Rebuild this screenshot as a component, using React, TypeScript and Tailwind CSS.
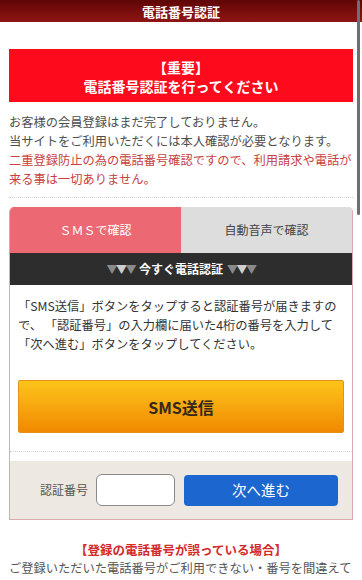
import React from "react";

const font = { fontFamily: '"Noto Sans CJK JP", "Noto Sans", sans-serif' };

const App = () => {
  return (
    <div
      className="relative w-[362px] h-[580px] overflow-hidden bg-white"
      style={font}
    >
      {/* header bar */}
      <div className="h-[22px] bg-gradient-to-b from-[#5e0606] via-[#7a0d0d] to-[#8e1515] flex items-center justify-center">
        <span className="text-white text-[13px] font-bold leading-none">
          電話番号認証
        </span>
      </div>

      <div className="px-[9px]">
        {/* notice */}
        <div className="mt-[27px] h-[53px] bg-[#fd0b1d] flex flex-col items-center justify-center pt-[3px] text-white font-bold text-[14px] leading-[19px]">
          <p>【重要】</p>
          <p>電話番号認証を行ってください</p>
        </div>

        <p className="mt-[11px] text-[12.25px] leading-[19px] text-[#4d4d4d] whitespace-nowrap">
          お客様の会員登録はまだ完了しておりません。
          <br />
          当サイトをご利用いただくには本人確認が必要となります。
          <br />
          <span className="text-[#c8413f]">
            二重登録防止の為の電話番号確認ですので、利用請求や電話が
            <br />
            来る事は一切ありません。
          </span>
        </p>

        <div className="mt-[8px] border-t border-dotted border-[#cfcfcf]" />

        {/* verification box */}
        <div className="mt-[9px] rounded-t-[5px] overflow-hidden border-x border-b border-[#dbaaae]">
          <div className="grid grid-cols-2 h-[46px] text-[12px]">
            <div className="bg-[#ec6974] text-white flex items-center justify-center">
              ＳＭＳで確認
            </div>
            <div className="bg-[#dddddd] text-[#444] flex items-center justify-center">
              自動音声で確認
            </div>
          </div>

          <div className="h-[32px] bg-[#2e2d2d] flex items-center justify-center gap-[4px] text-white font-bold text-[12px]">
            <span className="text-[11px] tracking-[-1.5px]">
              <span className="text-[#8a8a8a]">▼</span>
              <span className="text-[#cfcfcf]">▼</span>
              <span className="text-[#8a8a8a]">▼</span>
            </span>
            <span>今すぐ電話認証</span>
            <span className="text-[11px] tracking-[-1.5px]">
              <span className="text-[#8a8a8a]">▼</span>
              <span className="text-[#cfcfcf]">▼</span>
              <span className="text-[#8a8a8a]">▼</span>
            </span>
          </div>

          <div className="bg-white px-[8px] pt-[12px] pb-[18px] border-b border-dotted border-[#d4d4d4]">
            <p className="text-[12.25px] leading-[19px] text-[#333] whitespace-nowrap">
              「SMS送信」ボタンをタップすると認証番号が届きますの
              <br />
              で、 「認証番号」の入力欄に届いた4桁の番号を入力して
              <br />
              「次へ進む」ボタンをタップしてください。
            </p>
            <button className="mt-[26px] w-full h-[53px] rounded-[2px] border border-[#e6901c] bg-gradient-to-b from-[#fcc41a] to-[#f08900] text-[#35281a] text-[16px] font-bold">
              SMS送信
            </button>
          </div>

          <div className="h-[9px] bg-white" />

          <div className="h-[58px] bg-[#ede9e2] flex items-center pl-[30px]">
            <span className="text-[12px] text-[#555]">認証番号</span>
            <input
              className="ml-[8px] w-[79px] h-[32px] rounded-[6px] border border-[#8a8a8a] bg-white"
              type="text"
            />
            <button className="ml-[9px] w-[154px] h-[31px] rounded-[4px] bg-[#1b67cf] text-white text-[14.5px]">
              次へ進む
            </button>
          </div>
        </div>

        <p className="mt-[20px] text-center text-[12.5px] leading-[19px] font-bold text-[#d42a2a] whitespace-nowrap">
          【登録の電話番号が誤っている場合】
        </p>
        <p className="text-[12.25px] leading-[19px] text-[#555] whitespace-nowrap">
          ご登録いただいた電話番号がご利用できない・番号を間違えて
        </p>
      </div>

      {/* scroll indicator */}
      <div className="absolute top-0 right-[2px] w-[3px] h-[215px] rounded-full bg-[#6f6f6f]" />
    </div>
  );
};

export default App;
